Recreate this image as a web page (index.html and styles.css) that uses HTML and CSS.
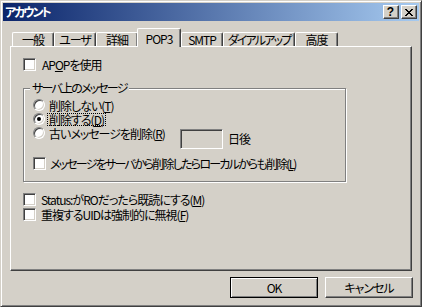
FILE: index.html
```html
<!DOCTYPE html>
<html lang="ja">
<head>
<meta charset="utf-8">
<title>アカウント</title>
<link rel="stylesheet" href="styles.css">
</head>
<body>
<div class="window">
  <div class="titlebar">
    <span class="title">アカウント</span>
    <div class="tbtns">
      <span class="tbtn help">?</span>
      <span class="tbtn close"><svg width="8" height="7" viewBox="0 0 8 7" shape-rendering="crispEdges"><path fill="#000" d="M0 0h2v1H0zM6 0h2v1H6zM1 1h2v1H1zM5 1h2v1H5zM2 2h4v1H2zM3 3h2v1H3zM2 4h4v1H2zM1 5h2v1H1zM5 5h2v1H5zM0 6h2v1H0zM6 6h2v1H6z"/></svg></span>
    </div>
  </div>
  <div class="client">
    <div class="tabs">
      <div class="tab w42">一般</div>
      <div class="tab w42">ユーザ</div>
      <div class="tab w42">詳細</div>
      <div class="tab sel">POP3</div>
      <div class="tab w42">SMTP</div>
      <div class="tab w72 k">ダイアルアップ</div>
      <div class="tab w43">高度</div>
    </div>
    <div class="panel">
      <div class="row apop"><span class="chk"></span><span class="txt t6">AP<u>O</u>Pを使用</span></div>
      <div class="group">
        <div class="legend k">サーバ上のメッセージ</div>
        <div class="radios">
          <div class="rrow"><span class="radio"></span><span class="lbl">削除しない(<u>T</u>)</span></div>
          <div class="rrow"><span class="radio on"></span><span class="lbl focus">削除する(<u>D</u>)</span></div>
          <div class="rrow r3"><span class="radio"></span><span class="lbl wide">古いメッセージを削除(<u>R</u>)</span><span class="edit"></span><span class="unit">日後</span></div>
        </div>
        <div class="row gchk"><span class="chk"></span><span class="txt t4 k">メッセージをサーバから削除したらローカルからも削除(<u>L</u>)</span></div>
      </div>
      <div class="row b1"><span class="chk"></span><span class="txt t5">Status:がROだったら既読にする(<u>M</u>)</span></div>
      <div class="row b2"><span class="chk"></span><span class="txt t5">重複するUIDは強制的に無視(<u>F</u>)</span></div>
    </div>
    <div class="buttons">
      <button class="btn default">OK</button>
      <button class="btn">キャンセル</button>
    </div>
  </div>
</div>
</body>
</html>
```

FILE: styles.css
```css
html, body {
  margin: 0;
  padding: 0;
  background: #d4d0c8;
}
body {
  font-family: "Noto Sans CJK JP", "Noto Sans", sans-serif;
  font-size: 12px;
  font-feature-settings: "palt";
  letter-spacing: -1px;
  color: #000;
}
.k {
  letter-spacing: -1.8px;
}
.window {
  width: 422px;
  height: 307px;
  box-sizing: border-box;
  background: #d4d0c8;
  border: 1px solid;
  border-color: #d4d0c8 #404040 #404040 #d4d0c8;
  box-shadow: inset 1px 1px 0 #fff, inset -1px -1px 0 #808080;
  padding: 2px;
  display: flex;
  flex-direction: column;
}
.titlebar {
  height: 18px;
  flex: none;
  display: flex;
  align-items: center;
  background: linear-gradient(to right, #0a246a, #a6caf0);
  padding-left: 2px;
}
.title {
  color: #fff;
  font-weight: bold;
  line-height: 18px;
  letter-spacing: -2px;
}
.tbtns {
  margin-left: auto;
  margin-right: 2px;
  display: flex;
  gap: 2px;
}
.tbtn {
  width: 16px;
  height: 14px;
  box-sizing: border-box;
  background: #d4d0c8;
  border: 1px solid;
  border-color: #fff #404040 #404040 #fff;
  box-shadow: inset -1px -1px 0 #808080;
  display: flex;
  align-items: center;
  justify-content: center;
}
.help {
  font-family: "Liberation Sans", sans-serif;
  font-weight: bold;
  font-size: 12px;
  line-height: 12px;
  letter-spacing: 0;
  padding-right: 1px;
}
.close svg {
  display: block;
  margin-right: 1px;
}
.client {
  flex: 1;
  display: flex;
  flex-direction: column;
  padding: 0 7px;
}
.tabs {
  height: 25px;
  flex: none;
  display: flex;
  align-items: flex-end;
  padding-left: 2px;
}
.tab {
  height: 14px;
  box-sizing: border-box;
  border-top: 1px solid #fff;
  border-left: 1px solid #fff;
  border-right: 1px solid #404040;
  box-shadow: inset -1px 0 0 #808080;
  border-radius: 2px 2px 0 0;
  text-align: center;
  line-height: 13px;
  white-space: nowrap;
  background: #d4d0c8;
}
.w42 { width: 42px; }
.w43 { width: 43px; }
.w72 { width: 72px; }
.tab.sel {
  width: 44px;
  height: 19px;
  margin-left: -1px;
  margin-bottom: -1px;
  padding-top: 3px;
  position: relative;
  z-index: 1;
}
.panel {
  height: 225px;
  flex: none;
  box-sizing: border-box;
  border: 1px solid;
  border-color: #fff #404040 #404040 #fff;
  box-shadow: inset -1px -1px 0 #808080;
  padding-left: 12px;
}
.row {
  display: flex;
  align-items: center;
  height: 13px;
}
.chk {
  width: 13px;
  height: 13px;
  flex: none;
  box-sizing: border-box;
  background: #fff;
  border: 1px solid;
  border-color: #808080 #fff #fff #808080;
  box-shadow: inset 1px 1px 0 #404040, inset -1px -1px 0 #d4d0c8;
}
.txt {
  line-height: 13px;
  white-space: nowrap;
}
.t4 { margin-left: 4px; }
.t5 { margin-left: 5px; }
.t6 { margin-left: 6px; }
u {
  text-underline-offset: 1px;
}
.apop { margin-top: 11px; }
.group {
  margin-top: 17px;
  width: 323px;
  box-sizing: border-box;
  border: 1px solid #808080;
  box-shadow: 1px 1px 0 #fff, inset 1px 1px 0 #fff;
  padding-bottom: 11px;
}
.legend {
  width: fit-content;
  margin: -8px 0 0 6px;
  padding: 0 2px;
  background: #d4d0c8;
  line-height: 13px;
  white-space: nowrap;
}
.radios {
  margin: 4px 0 0 9px;
}
.rrow {
  display: flex;
  align-items: center;
  height: 14px;
}
.rrow.r3 {
  align-items: flex-start;
  height: 23px;
}
.radio {
  width: 12px;
  height: 12px;
  flex: none;
  box-sizing: border-box;
  border-radius: 50%;
  background: #fff;
  border: 1px solid;
  border-color: #808080 #fff #fff #808080;
  box-shadow: inset 1px 1px 0 #404040, inset -1px -1px 0 #d4d0c8;
  display: flex;
  align-items: center;
  justify-content: center;
}
.r3 .radio { margin-top: 1px; }
.radio.on::after {
  content: "";
  width: 4px;
  height: 4px;
  border-radius: 50%;
  background: #000;
}
.lbl {
  margin-left: 2px;
  padding: 0 2px;
  line-height: 13px;
  white-space: nowrap;
}
.r3 .lbl { margin-top: 1px; }
.lbl.wide {
  width: 133px;
  box-sizing: border-box;
}
.focus {
  outline: 1px dotted #000;
  outline-offset: -1px;
}
.edit {
  width: 43px;
  height: 20px;
  margin-top: 3px;
  flex: none;
  box-sizing: border-box;
  background: #d4d0c8;
  border: 1px solid;
  border-color: #808080 #fff #fff #808080;
  box-shadow: inset 1px 1px 0 #404040, inset -1px -1px 0 #d4d0c8;
}
.unit {
  margin: 3px 0 0 5px;
  line-height: 20px;
}
.gchk {
  margin: 8px 0 0 9px;
}
.b1 { margin-top: 11px; }
.b2 { margin-top: 2px; }
.buttons {
  margin-top: 6px;
  margin-right: -1px;
  display: flex;
  justify-content: flex-end;
  gap: 7px;
}
.btn {
  width: 88px;
  height: 21px;
  box-sizing: border-box;
  padding: 0;
  margin: 0;
  font: inherit;
  letter-spacing: -1px;
  color: #000;
  background: #d4d0c8;
  border: 1px solid;
  border-color: #fff #404040 #404040 #fff;
  box-shadow: inset -1px -1px 0 #808080;
  line-height: 17px;
}
.btn.default {
  border-color: #000;
  box-shadow: inset 1px 1px 0 #fff, inset -1px -1px 0 #808080;
}
```
